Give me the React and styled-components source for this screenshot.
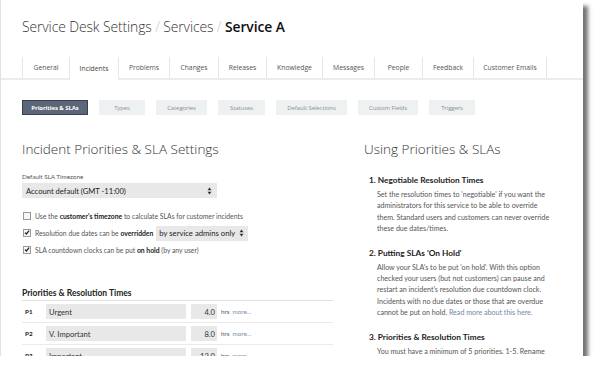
import React from 'react';
import styled, { createGlobalStyle } from 'styled-components';

const GlobalStyle = createGlobalStyle`
  html, body {
    margin: 0;
    padding: 0;
    background: #ffffff;
  }
  body {
    font-family: Lato, "Open Sans", sans-serif;
    color: #444;
  }
`;

const tabs = ['General', 'Incidents', 'Problems', 'Changes', 'Releases', 'Knowledge', 'Messages', 'People', 'Feedback', 'Customer Emails'];
const tabWidths = [47, 49, 51, 49, 48, 56, 52, 48, 51, 74];

const pills = ['Priorities & SLAs', 'Types', 'Categories', 'Statuses', 'Default Selections', 'Custom Fields', 'Triggers'];
const pillWidths = [66, 46, 51, 47, 71, 60, 46];

const priorities = [
  { code: 'P1', name: 'Urgent', hours: '4.0' },
  { code: 'P2', name: 'V. Important', hours: '8.0' },
  { code: 'P3', name: 'Important', hours: '12.0' },
];

function UpDown() {
  return (
    <Arrows viewBox="0 0 6 10" width="5" height="8">
      <path d="M3 0.5 L5.5 4 L0.5 4 Z" fill="#333" />
      <path d="M3 9.5 L5.5 6 L0.5 6 Z" fill="#333" />
    </Arrows>
  );
}

function Check({ checked }) {
  return (
    <Box>
      {checked && (
        <svg viewBox="0 0 8 8" width="7" height="7">
          <path d="M1.3 4.2 L3.2 6 L6.8 1.6" stroke="#222" strokeWidth="1.6" fill="none" />
        </svg>
      )}
    </Box>
  );
}

export default function App() {
  return (
    <>
      <GlobalStyle />
      <Window>
        <Title>
          Service Desk Settings <Slash>/</Slash> Services <Slash>/</Slash> <strong>Service A</strong>
        </Title>

        <TabBar>
          {tabs.map((t, i) => (
            <Tab key={t} $active={i === 1} style={{ width: tabWidths[i] }}>{t}</Tab>
          ))}
        </TabBar>

        <PillRow>
          {pills.map((p, i) => (
            <Pill key={p} $active={i === 0} style={{ width: pillWidths[i] }}>{p}</Pill>
          ))}
        </PillRow>

        <Columns>
          <LeftCol>
            <Heading>Incident Priorities &amp; SLA Settings</Heading>

            <FieldLabel>Default SLA Timezone</FieldLabel>
            <Select $width={195}>
              Account default (GMT -11:00)
              <UpDown />
            </Select>

            <Options>
              <Option>
                <Check />
                Use the <b>customer's timezone</b> to calculate SLAs for customer incidents
              </Option>
              <Option>
                <Check checked />
                Resolution due dates can be <b>overridden</b>
                <InlineSelect>
                  by service admins only
                  <UpDown />
                </InlineSelect>
              </Option>
              <Option>
                <Check checked />
                SLA countdown clocks can be put <b>on hold</b> (by any user)
              </Option>
            </Options>

            <SubHeading>Priorities &amp; Resolution Times</SubHeading>
            <Table>
              {priorities.map((p) => (
                <Row key={p.code}>
                  <Code>{p.code}</Code>
                  <NameInput>{p.name}</NameInput>
                  <HoursInput>{p.hours}</HoursInput>
                  <Unit>hrs</Unit>
                  <More>more...</More>
                </Row>
              ))}
            </Table>
          </LeftCol>

          <RightCol>
            <Heading>Using Priorities &amp; SLAs</Heading>
            <HelpList>
              <HelpItem>
                <HelpTitle>1. Negotiable Resolution Times</HelpTitle>
                <HelpText>
                  Set the resolution times to 'negotiable' if you want the administrators for this service to be able to override
                  them. Standard users and customers can never override these due dates/times.
                </HelpText>
              </HelpItem>
              <HelpItem>
                <HelpTitle>2. Putting SLAs 'On Hold'</HelpTitle>
                <HelpText>
                  Allow your SLA's to be put 'on hold'. With this option checked your users (but not customers) can pause and
                  restart an incident's resolution due countdown clock. Incidents with no due dates or those that are overdue
                  cannot be put on hold. <Link>Read more about this here.</Link>
                </HelpText>
              </HelpItem>
              <HelpItem>
                <HelpTitle>3. Priorities &amp; Resolution Times</HelpTitle>
                <HelpText>
                  You must have a minimum of 5 priorities. 1-5. Rename them to suit your needs and set the resolution times.
                </HelpText>
              </HelpItem>
            </HelpList>
          </RightCol>
        </Columns>
      </Window>
    </>
  );
}

const Window = styled.div`
  width: 582px;
  height: 356px;
  overflow: hidden;
  background: #fff;
  border-left: 1px solid #e2e2e2;
  box-shadow: 5px 6px 4px rgba(0, 0, 0, 0.55);
`;

const Title = styled.h1`
  margin: 0;
  padding: 17px 0 0 21px;
  height: 41px;
  box-sizing: border-box;
  font-family: "Open Sans", sans-serif;
  font-weight: 300;
  font-size: 13.9px;
  color: #333;
  letter-spacing: -0.1px;

  strong {
    font-weight: 600;
    color: #111;
  }
`;

const Slash = styled.span`
  color: #c8c8c8;
`;

const TabBar = styled.div`
  display: flex;
  margin-top: 16px;
  padding-left: 21px;
  border-bottom: 2px solid #ececec;
  height: 21px;
`;

const Tab = styled.div`
  display: flex;
  align-items: center;
  justify-content: center;
  box-sizing: border-box;
  border-left: 1px solid #e6e6e6;
  margin-bottom: ${(p) => (p.$active ? '-2px' : '0')};
  background: #fff;
  font-family: "Open Sans", sans-serif;
  font-size: 6.8px;
  color: ${(p) => (p.$active ? '#4d3f33' : '#555')};

  &:last-child {
    border-right: 1px solid #e6e6e6;
  }
`;

const PillRow = styled.div`
  display: flex;
  gap: 11px;
  margin-top: 20px;
  padding-left: 21px;
`;

const Pill = styled.div`
  height: 15px;
  box-sizing: border-box;
  display: flex;
  align-items: center;
  justify-content: center;
  font-family: "Open Sans", sans-serif;
  font-size: 6px;
  letter-spacing: -0.1px;
  background: ${(p) => (p.$active ? '#5b6678' : '#eef1f2')};
  border: 1px solid ${(p) => (p.$active ? '#36404e' : '#eef1f2')};
  color: ${(p) => (p.$active ? '#fff' : '#8a8f94')};
  font-weight: ${(p) => (p.$active ? 700 : 400)};
`;

const Columns = styled.div`
  display: grid;
  grid-template-columns: 311px 1fr;
  gap: 31px;
  padding-left: 21px;
  margin-top: 25px;
`;

const LeftCol = styled.div``;

const RightCol = styled.div``;

const Heading = styled.h2`
  margin: 0;
  font-family: "Open Sans", sans-serif;
  font-weight: 300;
  font-size: 13.5px;
  color: #333;
  line-height: 18px;
`;

const FieldLabel = styled.div`
  margin-top: 15px;
  font-size: 6.3px;
  color: #555;
`;

const Select = styled.div`
  margin-top: 3px;
  width: ${(p) => p.$width}px;
  height: 15px;
  background: #e8e8e8;
  display: flex;
  align-items: center;
  justify-content: space-between;
  padding: 0 5px 0 4px;
  box-sizing: border-box;
  font-size: 7.6px;
  color: #222;
`;

const Arrows = styled.svg`
  display: block;
  flex: none;
`;

const Options = styled.div`
  margin-top: 11px;
  display: flex;
  flex-direction: column;
  gap: 3px;
`;

const Option = styled.div`
  display: flex;
  align-items: center;
  height: 14px;
  font-size: 6.8px;
  color: #555;
  white-space: pre;

  b {
    color: #222;
    font-weight: 700;
  }
`;

const Box = styled.span`
  width: 6px;
  height: 6px;
  border: 1px solid #9a9a9a;
  background: #f6f6f6;
  margin: 0 4px 0 1px;
  display: flex;
  align-items: center;
  justify-content: center;
  svg {
    margin-top: -1px;
  }
`;

const InlineSelect = styled.span`
  margin-left: 3px;
  height: 15px;
  width: 92px;
  background: #e8e8e8;
  display: flex;
  align-items: center;
  justify-content: space-between;
  padding: 0 4px 0 3px;
  box-sizing: border-box;
  font-size: 7.7px;
  color: #222;
`;

const SubHeading = styled.div`
  margin-top: 31px;
  font-size: 8.5px;
  font-weight: 700;
  color: #222;
  padding-bottom: 2px;
  border-bottom: 1px solid #e2e2e2;
`;

const Table = styled.div``;

const Row = styled.div`
  display: flex;
  align-items: center;
  height: 21px;
  border-bottom: 1px solid #eaeaea;
`;

const Code = styled.div`
  width: 24px;
  padding-left: 3px;
  box-sizing: border-box;
  font-size: 6.3px;
  font-weight: 700;
  color: #222;
`;

const NameInput = styled.div`
  width: 140px;
  height: 15px;
  background: #e8e8e8;
  display: flex;
  align-items: center;
  padding-left: 3px;
  box-sizing: border-box;
  font-size: 7.6px;
  color: #333;
`;

const HoursInput = styled.div`
  margin-left: 5px;
  width: 26px;
  height: 15px;
  background: #e8e8e8;
  display: flex;
  align-items: center;
  justify-content: flex-end;
  padding-right: 2px;
  box-sizing: border-box;
  font-size: 7.6px;
  color: #333;
`;

const Unit = styled.span`
  margin-left: 4px;
  font-size: 6.3px;
  color: #555;
`;

const More = styled.span`
  margin-left: 3px;
  font-size: 6.3px;
  color: #7a8ea6;
`;

const HelpList = styled.div`
  margin-top: 16px;
  padding-left: 5px;
  display: flex;
  flex-direction: column;
  gap: 12px;
`;

const HelpItem = styled.div``;

const HelpTitle = styled.div`
  font-size: 8.3px;
  font-weight: 700;
  color: #222;
  line-height: 12px;
`;

const HelpText = styled.p`
  margin: 3px 0 0 8px;
  width: 180px;
  font-size: 7.1px;
  line-height: 11.4px;
  color: #555;
`;

const Link = styled.span`
  color: #6f88a6;
`;
